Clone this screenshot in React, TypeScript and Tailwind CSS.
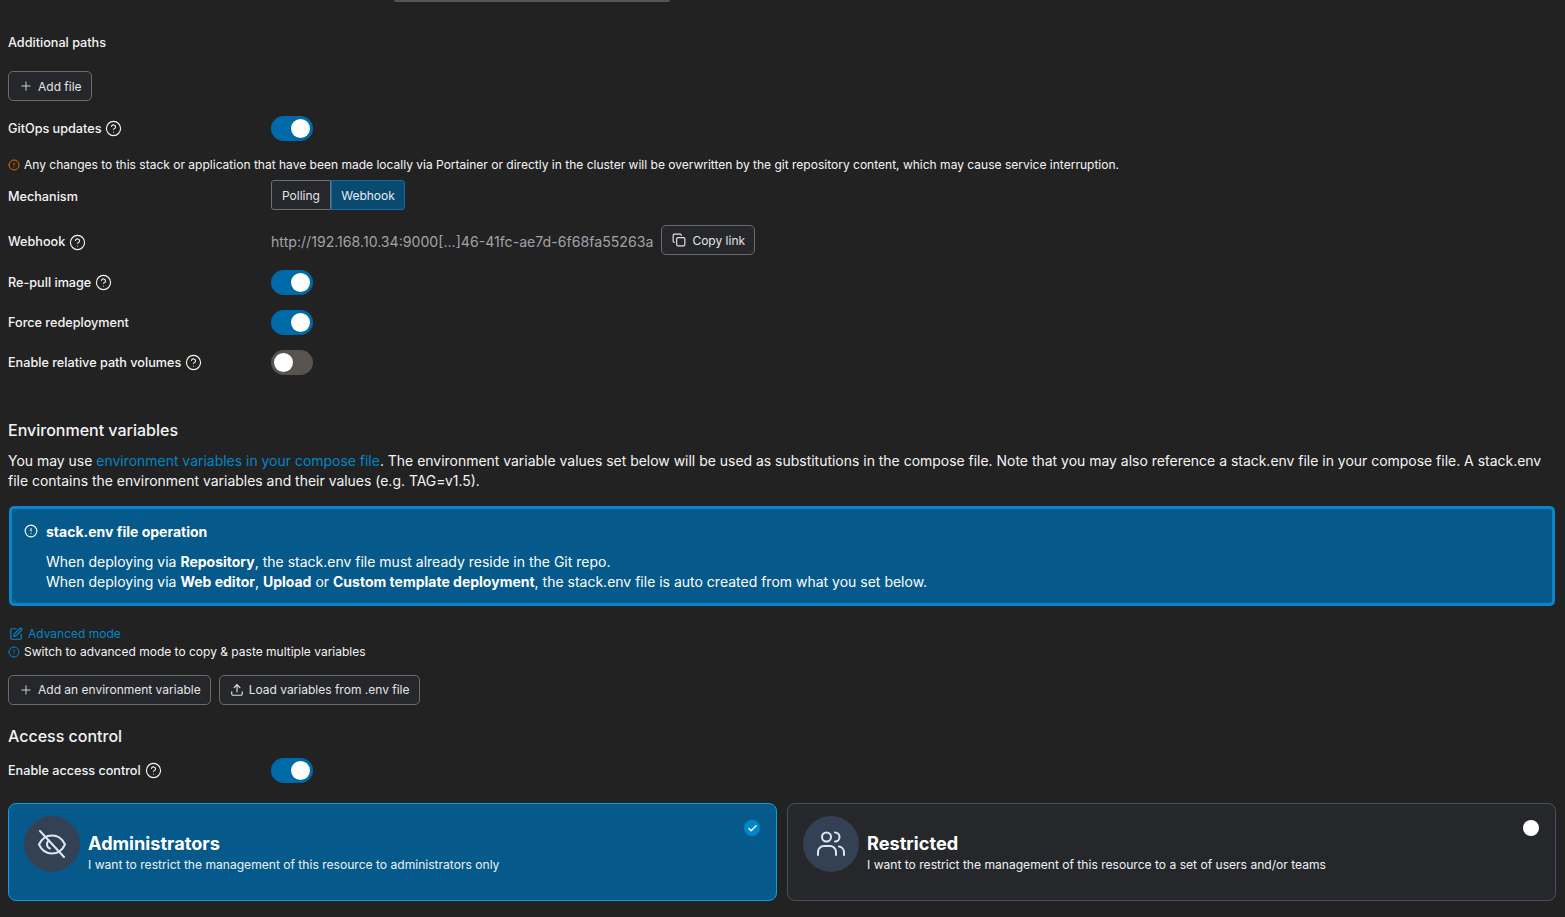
import { Copy, Info, Plus, SquarePen, Upload, CircleHelp, Check } from "lucide-react";
import type { ReactNode } from "react";

const Help = () => <CircleHelp className="ml-[4px] h-[17px] w-[17px] text-[#f4f4f5]" strokeWidth={1.6} />;

const Toggle = ({ on = true }: { on?: boolean }) => (
  <div className={`flex h-[25px] w-[42px] items-center rounded-full px-[3px] ${on ? "justify-end bg-[#0069a8]" : "justify-start bg-[#57534e]"}`}>
    <div className="h-[19px] w-[19px] rounded-full bg-white" />
  </div>
);

const Button = ({ icon, children }: { icon: ReactNode; children: ReactNode }) => (
  <div className="flex h-[30px] items-center gap-[5px] rounded-[5px] border border-[#6b6b6b] bg-[#26272b] pr-[9px] pl-[10px] text-[12px] text-[#e4e4e7]">
    {icon}
    {children}
  </div>
);

const Row = ({ label, help, className, labelClass = "pt-[1px]", children }: { label: string; help?: boolean; className: string; labelClass?: string; children: ReactNode }) => (
  <div className={`flex items-center ${className}`}>
    <div className={`flex w-[263px] items-center text-[12.65px] font-medium text-[#f4f4f5] ${labelClass}`}>
      {label}
      {help && <Help />}
    </div>
    {children}
  </div>
);

const AdminIcon = () => (
  <svg viewBox="0 0 28 28" className="h-[28px] w-[28px]" fill="none" stroke="currentColor" strokeWidth="2" strokeLinecap="round" strokeLinejoin="round">
    <path d="M1 14.5C4 8 9 5.5 14 5.5S24 8 27 14.5C24 21 19 23.5 14 23.5S4 21 1 14.5Z" />
    <path d="M11 10.5a4.5 4.5 0 0 0 1 8" />
    <path d="M2 1l24 26" />
  </svg>
);

const TeamIcon = () => (
  <svg viewBox="0 0 28 28" className="h-[28px] w-[28px]" fill="none" stroke="currentColor" strokeWidth="2" strokeLinecap="round" strokeLinejoin="round">
    <circle cx="9.5" cy="7" r="4.5" />
    <path d="M18 2.5a4.5 4.5 0 0 1 0 9" />
    <path d="M1 25v-3a6 6 0 0 1 6-6h6a6 6 0 0 1 6 6v3" />
    <path d="M22 16.5a6 6 0 0 1 5 6V25" />
  </svg>
);

const AccessCard = ({ title, text, icon, selected }: { title: string; text: string; icon: ReactNode; selected?: boolean }) => (
  <div className={`relative flex h-[98px] flex-1 items-start rounded-[8px] border px-[15px] pt-[12px] ${selected ? "border-[#0c9de4] bg-[#055a8b]" : "border-[#47505c] bg-[#26272b]"}`}>
    <div className="flex h-[56px] w-[56px] items-center justify-center rounded-full bg-[#344054] text-[#dbe7f3]">{icon}</div>
    <div className="ml-[8px] pt-[15px] text-white">
      <div className="text-[18.15px] leading-[24px] font-bold">{title}</div>
      <div className="mt-[2px] text-[12.09px] leading-[16px] text-[#eef2f6]">{text}</div>
    </div>
    {selected ? (
      <div className="absolute top-[16px] right-[16px] flex h-[16px] w-[16px] items-center justify-center rounded-full bg-[#0086c9]">
        <Check className="h-[11px] w-[11px] text-white" strokeWidth={3} />
      </div>
    ) : (
      <div className="absolute top-[16px] right-[16px] h-[16px] w-[16px] rounded-full bg-white" />
    )}
  </div>
);

export default function App() {
  return (
    <div className="h-[917px] w-[1565px] overflow-hidden bg-[#222222] pr-[9px] pl-[8px] font-['Inter',sans-serif] text-[#f4f4f5]">
      <div className="ml-[386px] h-[2px] w-[276px] rounded-b-[4px] bg-[#55555f]" />

      <div className="mt-[32px] text-[12.65px] leading-[17px] font-medium">Additional paths</div>
      <div className="mt-[20px] flex">
        <Button icon={<Plus className="h-[14px] w-[14px]" strokeWidth={1.5} />}>
          <span className="pt-[2px]">Add file</span>
        </Button>
      </div>

      <Row label="GitOps updates" help className="mt-[15px]">
        <Toggle />
      </Row>

      <div className="mt-[15px] flex h-[17px] items-center text-[12.02px] text-[#f4f4f5]">
        <Info className="mr-[4px] h-[12px] w-[12px] rotate-180 text-[#dc6803]" strokeWidth={2} />
        Any changes to this stack or application that have been made locally via Portainer or directly in the cluster will be overwritten by the git repository content, which may cause service interruption.
      </div>

      <Row label="Mechanism" labelClass="pt-[5px]" className="mt-[7px]">
        <div className="flex h-[30px] text-[12px]">
          <div className="flex w-[60px] items-center justify-center rounded-l-[3px] border border-[#71717a] bg-[#26272b] pt-[2px] text-[#e4e4e7]">Polling</div>
          <div className="flex w-[74px] items-center justify-center rounded-r-[3px] border border-[#0b6da3] bg-[#0a4a70] pt-[2px] text-[#e4eef5]">Webhook</div>
        </div>
      </Row>

      <Row label="Webhook" help labelClass="pt-[5px]" className="mt-[15px]">
        <div className="pt-[4px] text-[14.14px] text-[#a1a1aa]">http://192.168.10.34:9000[...]46-41fc-ae7d-6f68fa55263a</div>
        <div className="ml-[8px]">
          <Button icon={<Copy className="h-[14px] w-[14px]" strokeWidth={2} />}>
            <span className="ml-[1px] pt-[2px]">Copy link</span>
          </Button>
        </div>
      </Row>

      <Row label="Re-pull image" help className="mt-[15px]">
        <Toggle />
      </Row>
      <Row label="Force redeployment" className="mt-[15px]">
        <Toggle />
      </Row>
      <Row label="Enable relative path volumes" help className="mt-[15px]">
        <Toggle on={false} />
      </Row>

      <div className="mt-[44px] text-[16px] leading-[22px] font-medium">Environment variables</div>
      <p className="mt-[10px] text-[13.96px] leading-[20px]">
        You may use <span className="text-[#0086c9]">environment variables in your compose file</span>. The environment variable values set below will be used as substitutions in the compose file. Note that you may also reference a stack.env file in your compose file. A stack.env file contains the environment variables and their values (e.g. TAG=v1.5).
      </p>

      <div className="mx-[1px] mt-[15px] h-[100px] rounded-[5px] border-[3px] border-[#0a85c7] bg-[#055a8b] pt-[13px] pl-[12px] text-white">
        <div className="flex items-center text-[14px] leading-[20px] font-bold">
          <Info className="mr-[8px] -mt-[3px] h-[14px] w-[14px] rotate-180" strokeWidth={2} />
          stack.env file operation
        </div>
        <div className="mt-[10px] pl-[22px] text-[14px] leading-[20px]">
          <div>When deploying via <b>Repository</b>, the stack.env file must already reside in the Git repo.</div>
          <div>When deploying via <b>Web editor</b>, <b>Upload</b> or <b>Custom template deployment</b>, the stack.env file is auto created from what you set below.</div>
        </div>
      </div>

      <div className="mt-[20px] flex h-[16px] items-center text-[12px] text-[#0086c9]">
        <SquarePen className="mr-[5px] ml-[1px] h-[14px] w-[14px]" strokeWidth={2} />
        Advanced mode
      </div>
      <div className="mt-[2px] flex h-[16px] items-center text-[12px]">
        <Info className="mr-[4px] h-[12px] w-[12px] rotate-180 text-[#0086c9]" strokeWidth={2} />
        Switch to advanced mode to copy &amp; paste multiple variables
      </div>

      <div className="mt-[15px] flex gap-[8px]">
        <Button icon={<Plus className="h-[14px] w-[14px]" strokeWidth={1.5} />}>Add an environment variable</Button>
        <Button icon={<Upload className="h-[14px] w-[14px]" strokeWidth={2} />}>Load variables from .env file</Button>
      </div>

      <div className="mt-[20px] text-[16px] leading-[22px] font-medium">Access control</div>
      <Row label="Enable access control" help className="mt-[11px]">
        <Toggle />
      </Row>

      <div className="mt-[20px] flex gap-[10px]">
        <AccessCard
          selected
          title="Administrators"
          text="I want to restrict the management of this resource to administrators only"
          icon={<AdminIcon />}
        />
        <AccessCard
          title="Restricted"
          text="I want to restrict the management of this resource to a set of users and/or teams"
          icon={<TeamIcon />}
        />
      </div>
    </div>
  );
}
